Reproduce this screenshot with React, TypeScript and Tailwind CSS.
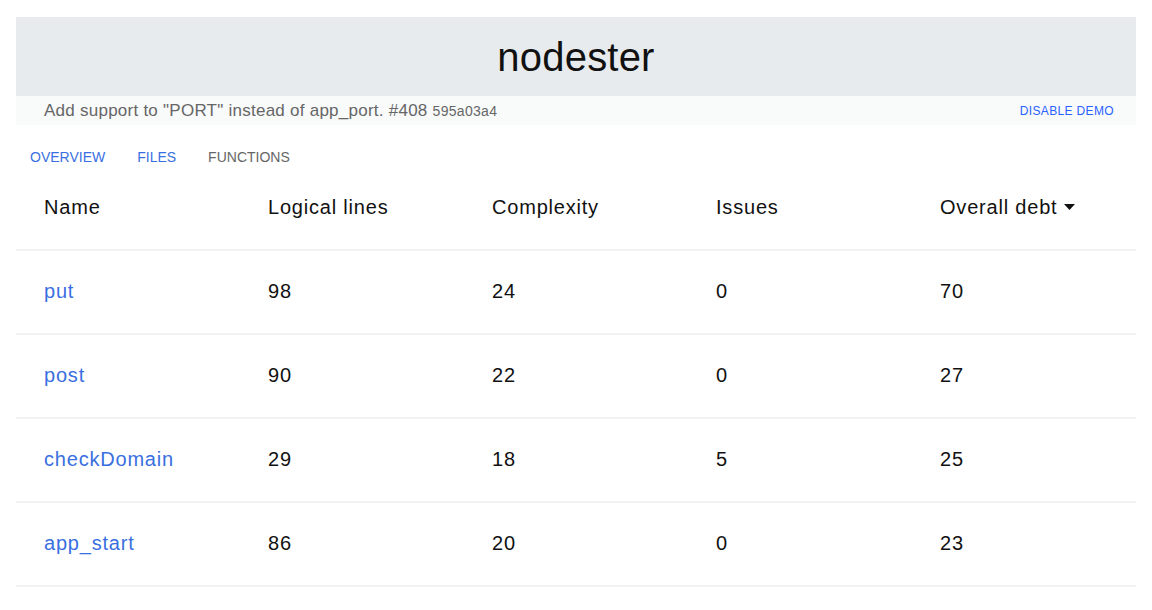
import React from "react";

const rows = [
  { name: "put", lines: 98, complexity: 24, issues: 0, debt: 70 },
  { name: "post", lines: 90, complexity: 22, issues: 0, debt: 27 },
  { name: "checkDomain", lines: 29, complexity: 18, issues: 5, debt: 25 },
  { name: "app_start", lines: 86, complexity: 20, issues: 0, debt: 23 },
];

export default function App() {
  return (
    <div
      className="min-h-[610px] bg-white px-4 pt-[17px] text-[#111]"
      style={{ fontFamily: '"Liberation Sans", Arial, sans-serif' }}
    >
      <header className="flex h-[79px] items-center justify-center bg-[#e8ebee]">
        <h1 className="text-[40px] font-light leading-none tracking-[0.2px] text-[#111]">nodester</h1>
      </header>
      <div className="flex h-[29px] items-center justify-between bg-[#f9fafa] pl-7 pr-[22px]">
        <div className="text-[17px] tracking-[0.25px] text-[#666]">
          Add support to "PORT" instead of app_port. #408{" "}
          <span className="text-[14px] tracking-[0.3px]">595a03a4</span>
        </div>
        <a className="text-[12px] tracking-[0.35px] text-[#2962ff]" href="#">
          DISABLE DEMO
        </a>
      </div>
      <nav className="flex h-[41px] items-start gap-[32px] pl-[14px] pt-[22px] text-[14px] leading-5">
        <a className="text-[#3a6fdf]" href="#">OVERVIEW</a>
        <a className="text-[#3a6fdf]" href="#">FILES</a>
        <span className="text-[#666]">FUNCTIONS</span>
      </nav>
      <table className="w-full table-fixed border-collapse text-[20px] tracking-[0.8px]">
        <thead>
          <tr className="h-[84px] border-b-2 border-[#f2f2f2]">
            <th className="pb-[2px] pl-7 text-left font-normal">Name</th>
            <th className="pb-[2px] pl-7 text-left font-normal">Logical lines</th>
            <th className="pb-[2px] pl-7 text-left font-normal">Complexity</th>
            <th className="pb-[2px] pl-7 text-left font-normal">Issues</th>
            <th className="pb-[2px] pl-7 text-left font-normal">
              <span className="inline-flex items-center gap-[7px]">
                Overall debt
                <svg width="11" height="6" viewBox="0 0 11 6">
                  <path d="M0 0 L11 0 L5.5 6 Z" fill="#111" />
                </svg>
              </span>
            </th>
          </tr>
        </thead>
        <tbody>
          {rows.map((r) => (
            <tr key={r.name} className="h-[84px] border-b-2 border-[#f2f2f2]">
              <td className="pb-[2px] pl-7">
                <a className="text-[#3a6fdf]" href="#">{r.name}</a>
              </td>
              <td className="pb-[2px] pl-7">{r.lines}</td>
              <td className="pb-[2px] pl-7">{r.complexity}</td>
              <td className="pb-[2px] pl-7">{r.issues}</td>
              <td className="pb-[2px] pl-7">{r.debt}</td>
            </tr>
          ))}
        </tbody>
      </table>
    </div>
  );
}
